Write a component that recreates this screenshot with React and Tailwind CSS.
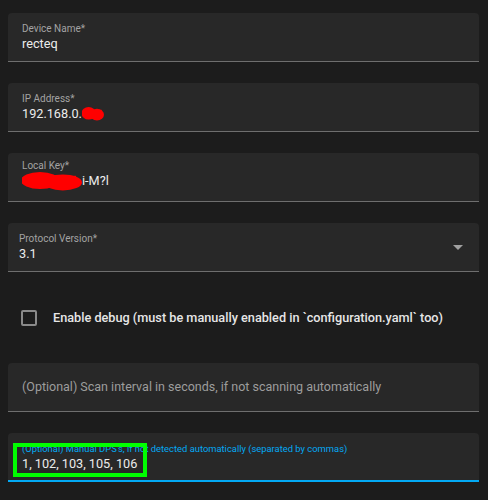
import React from 'react';

const Redact = ({ width, height }) => (
  <span className="inline-block align-middle" style={{ width, height }}>
    <svg width={width} height={height} viewBox={`0 0 ${width} ${height}`}>
      <ellipse cx={width * 0.3} cy={height * 0.45} rx={width * 0.32} ry={height * 0.45} fill="#f00" />
      <ellipse cx={width * 0.68} cy={height * 0.55} rx={width * 0.32} ry={height * 0.42} fill="#f00" />
      <rect x={width * 0.1} y={height * 0.2} width={width * 0.8} height={height * 0.55} fill="#f00" />
    </svg>
  </span>
);

const Field = ({ label, children, labelPad = 'pl-[14px]' }) => (
  <div className="h-[49px] rounded-t-[4px] bg-[#282828] border-b border-[#6e6e6e] flex flex-col justify-center">
    <div className={`${labelPad} text-[10px] leading-[13px] text-[#a3a3a3]`}>{label}</div>
    <div className={`${labelPad} text-[12.7px] leading-[18px] text-[#ececec]`}>{children}</div>
  </div>
);

export default function App() {
  return (
    <div className="w-[488px] h-[500px] bg-[#1c1c1c] pt-[13px] pl-2 pr-[9px] flex flex-col gap-[21px]" style={{ fontFamily: 'Roboto, "Liberation Sans", sans-serif' }}>
      <Field label="Device Name*">recteq</Field>

      <Field label="IP Address*">
        <span className="inline-flex items-center">
          192.168.0.<Redact width={22} height={14} />
        </span>
      </Field>

      <Field label="Local Key*">
        <span className="inline-flex items-center">
          <Redact width={60} height={19} />i-M?l
        </span>
      </Field>

      {/* dropdown */}
      <div className="h-[49px] rounded-t-[4px] bg-[#282828] border-b border-[#6e6e6e] flex items-center pl-[11px] pr-[16px]">
        <div className="flex-1 flex flex-col">
          <div className="text-[10px] leading-[13px] text-[#a3a3a3]">Protocol Version*</div>
          <div className="text-[12.7px] leading-[18px] text-[#ececec]">3.1</div>
        </div>
        <svg width="10" height="5" viewBox="0 0 10 5">
          <path d="M0 0 L10 0 L5 5 Z" fill="#a0a0a0" />
        </svg>
      </div>

      {/* checkbox row */}
      <div className="h-[49px] flex items-center pl-[13px]">
        <div className="w-4 h-4 rounded-[2px] border-2 border-[#8a8a8a]" />
        <span className="ml-4 text-[12.7px] font-medium text-[#e6e6e6] whitespace-nowrap">
          Enable debug (must be manually enabled in `configuration.yaml` too)
        </span>
      </div>

      <div className="h-[49px] rounded-t-[4px] bg-[#282828] border-b border-[#6e6e6e] flex items-center pl-[14px]">
        <span className="text-[12.5px] text-[#9d9d9d]">(Optional) Scan interval in seconds, if not scanning automatically</span>
      </div>

      {/* focused field */}
      <div className="relative h-[49px] rounded-t-[4px] bg-[#282828] border-b-2 border-[#03a9f4] flex flex-col justify-center pl-[14px] pt-[2px]">
        <div className="text-[9.4px] leading-[13px] text-[#03a9f4]">(Optional) Manual DPS's, if not detected automatically (separated by commas)</div>
        <div className="text-[12.7px] leading-[18px] text-[#ececec]">1, 102, 103, 105, 106</div>
        <div className="absolute left-[5px] top-[10px] w-[134px] h-[34px] border-4 border-[#00ff00]" />
      </div>
    </div>
  );
}
